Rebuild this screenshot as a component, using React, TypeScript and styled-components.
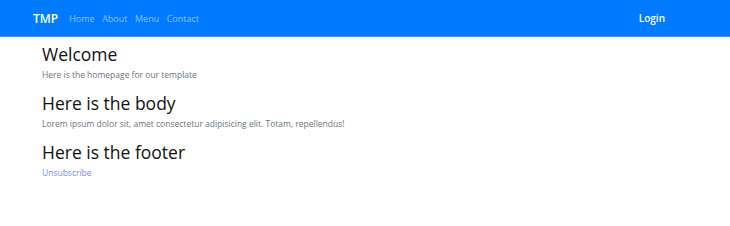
import React from 'react';
import styled, { createGlobalStyle } from 'styled-components';

const GlobalStyle = createGlobalStyle`
  body {
    margin: 0;
    background: #fff;
    font-family: "Open Sans", "Liberation Sans", sans-serif;
    color: #212529;
  }
`;

const Navbar = styled.nav`
  height: 37px;
  background-color: #007bff;
  display: flex;
  align-items: center;
  padding: 0 65px 0 33px;
  border-bottom: 1px solid #3d95ff;
  box-sizing: border-box;
`;

const Brand = styled.a`
  color: #fff;
  font-size: 12px;
  font-weight: 600;
  margin-right: 11px;
  text-decoration: none;
`;

const NavLinks = styled.div`
  display: flex;
  gap: 7.5px;
  flex: 1;
`;

const NavLink = styled.a<{ $active?: boolean }>`
  color: ${(p) => (p.$active ? '#fff' : 'rgba(255,255,255,0.55)')};
  font-size: ${(p) => (p.$active ? '10px' : '9px')};
  font-weight: ${(p) => (p.$active ? 600 : 400)};
  text-decoration: none;
`;

const Main = styled.main`
  padding: 6px 42px;
`;

const Heading = styled.h2`
  margin: 0;
  font-size: 17.5px;
  font-weight: 400;
  line-height: 22px;
  color: #111;
`;

const Text = styled.p`
  margin: 3px 0 10px;
  font-size: 8.5px;
  color: #6c757d;
  line-height: 14px;
`;

const Link = styled.a`
  font-size: 8.5px;
  color: #6f8cff;
  text-decoration: none;
  line-height: 14px;
  display: block;
  margin-top: 3px;
`;

export default function App() {
  return (
    <>
      <GlobalStyle />
      <Navbar>
        <Brand>TMP</Brand>
        <NavLinks>
          <NavLink>Home</NavLink>
          <NavLink>About</NavLink>
          <NavLink>Menu</NavLink>
          <NavLink>Contact</NavLink>
        </NavLinks>
        <NavLink $active>Login</NavLink>
      </Navbar>
      <Main>
        <Heading>Welcome</Heading>
        <Text>Here is the homepage for our template</Text>
        <Heading>Here is the body</Heading>
        <Text>Lorem ipsum dolor sit, amet consectetur adipisicing elit. Totam, repellendus!</Text>
        <Heading>Here is the footer</Heading>
        <Link>Unsubscribe</Link>
      </Main>
    </>
  );
}
